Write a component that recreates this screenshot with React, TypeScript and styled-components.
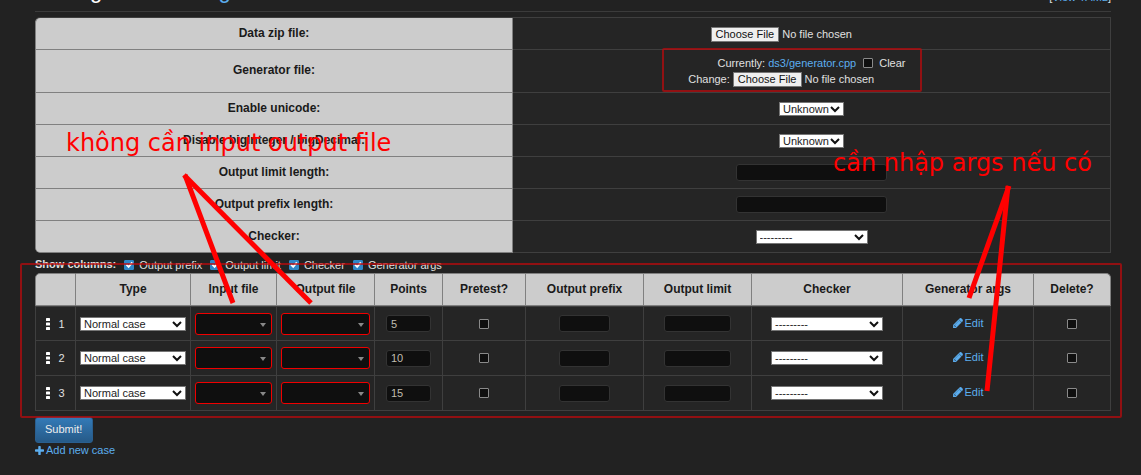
import React from "react";
import styled, { createGlobalStyle } from "styled-components";

const GlobalStyle = createGlobalStyle`
  *, *::before, *::after { box-sizing: border-box; }
  body {
    margin: 0;
    background: #222;
    color: #e0e0e0;
    font: 11px/16px "Liberation Sans", Arial, sans-serif;
  }
  input, select, button { font: inherit; margin: 0; }
`;

const Page = styled.main`
  position: relative;
  padding: 0 30px 16px 35px;
  overflow: hidden;
`;

const Header = styled.header`
  display: flex;
  justify-content: space-between;
  align-items: flex-end;
  height: 12px;
  padding-bottom: 8px;
  border-bottom: 1px solid #3b3b3b;
  margin-bottom: 5px;
`;

const Title = styled.h2`
  margin: 0;
  font-size: 22px;
  font-weight: 400;
  line-height: 24px;
  color: #fff;
`;

const HeaderNote = styled.span`
  line-height: 12px;
`;

const Link = styled.a`
  color: #5caeef;
  text-decoration: none;
`;

const IconLink = styled(Link)`
  display: inline-flex;
  align-items: center;
  gap: 2px;
  line-height: 14px;
`;

const Table = styled.table`
  width: 100%;
  table-layout: fixed;
  border-collapse: separate;
  border-spacing: 0;
`;

const HeadCell = styled.th`
  padding: 0 4px 2px;
  background: #ccc;
  color: #1a1a1a;
  font-size: 12px;
  line-height: 16px;
  text-align: center;
  vertical-align: middle;
`;

const SettingsTable = styled(Table)`
  border-top: 1px solid #3f3f3f;
  border-radius: 5px 0 0 5px;
  overflow: hidden;
`;

const SettingName = styled(HeadCell)`
  width: 478px;
  border: solid #808080;
  border-width: 0 1px 1px 1px;

  tr:first-child > & {
    border-top-left-radius: 5px;
    box-shadow: 0 -1px 0 #808080;
  }
  tr:last-child > & { border-bottom-left-radius: 5px; }
`;

const SettingValue = styled.td<{ $tall?: boolean }>`
  height: ${(p) => (p.$tall ? 43 : 32)}px;
  padding: 0;
  background: #252525;
  border: solid #3f3f3f;
  border-width: 0 1px 1px 0;
  text-align: center;
  vertical-align: middle;
`;

const ValueLine = styled.div`
  display: flex;
  justify-content: center;
  align-items: center;
  gap: 3px;
  height: 16px;
`;

const ClearLabel = styled.label`
  display: inline-flex;
  align-items: center;
  gap: 6px;
  margin-left: 4px;
`;

const FileInput = styled.input.attrs({ type: "file" })`
  width: 202px;
  height: 16px;
  line-height: 16px;
  vertical-align: middle;
  color: #e0e0e0;

  &::file-selector-button {
    height: 15px;
    margin: 0 3px 0 0;
    padding: 0 4px;
    border: 1px solid #767676;
    border-radius: 0;
    background: #efefef;
    color: #111;
    font: inherit;
    line-height: 13px;
  }
`;

const SelectBox = styled.span<{ $width?: number }>`
  position: relative;
  display: block;
  width: ${(p) => (p.$width ? `${p.$width}px` : "100%")};
  height: 14px;
  margin: 0 auto;
`;

const SelectControl = styled.select`
  display: block;
  appearance: none;
  width: 100%;
  height: 14px;
  padding: 0 12px 0 3px;
  border: 1px solid #767676;
  border-radius: 0;
  background: #fff;
  color: #222;
  line-height: 12px;
`;

const Chevron = styled.svg`
  position: absolute;
  right: 4px;
  top: 4px;
  pointer-events: none;
`;

const TextInput = styled.input<{ $width: number }>`
  width: ${(p) => p.$width}px;
  max-width: 100%;
  height: 17px;
  padding: 0 4px;
  border: 1px solid #333;
  border-radius: 3px;
  background: #0f0f0f;
  color: #c0bcb0;
  vertical-align: middle;
`;

const Checkbox = styled.input.attrs({ type: "checkbox" })`
  appearance: none;
  position: relative;
  flex: none;
  width: 10px;
  height: 10px;
  border: 1px solid #8a8a8a;
  border-radius: 1px;
  background: #0f0f0f;
  vertical-align: middle;

  td > & {
    display: block;
    margin: 0 auto;
  }
  &:checked {
    border-color: #2f86c8;
    background: #2f86c8;
  }
  &:checked::before {
    content: "";
    position: absolute;
    inset: 0;
    background: #fff;
    clip-path: polygon(6% 54%, 22% 38%, 40% 56%, 78% 8%, 96% 24%, 42% 90%);
  }
`;

const ColumnToggles = styled.div`
  display: flex;
  align-items: center;
  gap: 8px;
  height: 20px;
  padding-top: 4px;
`;

const TogglesTitle = styled.strong`
  padding-bottom: 2px;
`;

const Toggle = styled.label`
  display: inline-flex;
  align-items: center;
  gap: 5px;
`;

const CaseHead = styled(HeadCell)`
  height: 33px;
  border: solid #808080;
  border-width: 1px 1px 1px 0;

  &:first-child { border-left-width: 1px; border-top-left-radius: 5px; }
  &:last-child { border-top-right-radius: 5px; }
`;

const CaseCell = styled.td`
  height: 35px;
  padding: 0 4px;
  background: #252525;
  border: solid #3f3f3f;
  border-width: 0 1px 1px 0;
  text-align: center;
  vertical-align: middle;

  &:first-child { border-left-width: 1px; }
  tr:first-child > & { border-top-width: 1px; }
`;

const OrderHandle = styled.div`
  display: flex;
  align-items: center;
  justify-content: center;
  gap: 8px;
`;

const FilePicker = styled.div`
  position: relative;

  &::after {
    content: "";
    position: absolute;
    right: 6px;
    top: 10px;
    border: solid transparent;
    border-width: 4px 3px 0 3px;
    border-top-color: #888;
    pointer-events: none;
  }
`;

const FileSelect = styled.select`
  display: block;
  appearance: none;
  width: 100%;
  height: 22px;
  padding: 0 16px 0 6px;
  border: 1px solid #f00000;
  border-radius: 3px;
  background: #0f0f0f;
  color: #ccc;
`;

const Footer = styled.div`
  display: flex;
  flex-direction: column;
  align-items: flex-start;
  padding-top: 6px;
`;

const SubmitButton = styled.button`
  height: 26px;
  padding: 0 10px 2px 9px;
  border: 1px solid #2a5f8f;
  border-radius: 3px;
  background: linear-gradient(#337ab7, #265a88);
  color: #eee;
`;

const Frame = styled.div<{ $x: number; $y: number; $w: number; $h: number }>`
  position: absolute;
  left: ${(p) => p.$x}px;
  top: ${(p) => p.$y}px;
  width: ${(p) => p.$w}px;
  height: ${(p) => p.$h}px;
  border: 2px solid rgba(192, 8, 12, 0.7);
  border-radius: 2px;
  pointer-events: none;
`;

const Note = styled.span<{ $x: number; $y: number }>`
  position: absolute;
  left: ${(p) => p.$x}px;
  top: ${(p) => p.$y}px;
  color: #f00;
  font: 24px/28px "DejaVu Sans", sans-serif;
  white-space: nowrap;
  pointer-events: none;
`;

const Arrows = styled.svg`
  position: absolute;
  left: 0;
  top: 0;
  pointer-events: none;
`;

const PENCIL =
  "M491 1536l91-91-235-235-91 91v107h128v128h107zM1014 608q0-22-22-22-10 0-17 7l-542 542q-7 7-7 17 0 22 22 22 10 0 17-7l542-542q7-7 7-17zM960 416l416 416-832 832h-416v-416zM1643 512q0 53-37 90l-166 166-416-416 166-165q36-38 90-38 53 0 91 38l235 234q37 39 37 91z";
const PLUS =
  "M1600 736v192q0 40-28 68t-68 28h-416v416q0 40-28 68t-68 28h-192q-40 0-68-28t-28-68v-416h-416q-40 0-68-28t-28-68v-192q0-40 28-68t68-28h416v-416q0-40 28-68t68-28h192q40 0 68 28t28 68v416h416q40 0 68 28t28 68z";

const Pencil = () => (
  <svg
    width="10"
    height="10"
    viewBox="110 130 1550 1550"
    fill="currentColor"
    stroke="currentColor"
    strokeWidth="70"
    aria-hidden="true"
  >
    <path d={PENCIL} />
  </svg>
);

const Plus = () => (
  <svg width="9" height="9" viewBox="192 128 1408 1408" fill="currentColor" aria-hidden="true">
    <path d={PLUS} />
  </svg>
);

const Grip = () => (
  <svg width="4" height="12" viewBox="0 0 4 12" fill="#fff" aria-hidden="true">
    <rect width="4" height="3" rx="0.6" />
    <rect y="4.5" width="4" height="3" rx="0.6" />
    <rect y="9" width="4" height="3" rx="0.6" />
  </svg>
);

type SelectProps = {
  option: string;
  width?: number;
  id?: string;
  "aria-label"?: string;
};

const Select = ({ option, width, ...rest }: SelectProps) => (
  <SelectBox $width={width}>
    <SelectControl {...rest}>
      <option>{option}</option>
    </SelectControl>
    <Chevron width="10" height="7" viewBox="0 0 10 7" fill="none" stroke="#111" strokeWidth="2" aria-hidden="true">
      <path d="M1 1L5 5L9 1" />
    </Chevron>
  </SelectBox>
);

const columns: [string, number][] = [
  ["", 41],
  ["Type", 115],
  ["Input file", 86],
  ["Output file", 98],
  ["Points", 68],
  ["Pretest?", 83],
  ["Output prefix", 118],
  ["Output limit", 108],
  ["Checker", 151],
  ["Generator args", 131],
  ["Delete?", 77],
];

const toggles = ["Output prefix", "Output limit", "Checker", "Generator args"];
const cases = [5, 10, 15];

type SettingProps = { id: string; name: string; tall?: boolean; children: React.ReactNode };

const Setting = ({ id, name, tall, children }: SettingProps) => (
  <tr>
    <SettingName scope="row">
      <label htmlFor={id}>{name}</label>
    </SettingName>
    <SettingValue $tall={tall}>{children}</SettingValue>
  </tr>
);

const CaseRow = ({ index, points }: { index: number; points: number }) => (
  <tr>
    <CaseCell>
      <OrderHandle>
        <Grip />
        {index}
      </OrderHandle>
    </CaseCell>
    <CaseCell>
      <Select aria-label="Type" option="Normal case" />
    </CaseCell>
    <CaseCell>
      <FilePicker>
        <FileSelect aria-label="Input file" />
      </FilePicker>
    </CaseCell>
    <CaseCell>
      <FilePicker>
        <FileSelect aria-label="Output file" />
      </FilePicker>
    </CaseCell>
    <CaseCell>
      <TextInput $width={45} aria-label="Points" defaultValue={points} />
    </CaseCell>
    <CaseCell>
      <Checkbox aria-label="Pretest?" />
    </CaseCell>
    <CaseCell>
      <TextInput $width={51} aria-label="Output prefix" />
    </CaseCell>
    <CaseCell>
      <TextInput $width={67} aria-label="Output limit" />
    </CaseCell>
    <CaseCell>
      <Select width={112} aria-label="Checker" option="---------" />
    </CaseCell>
    <CaseCell>
      <IconLink href="#args">
        <Pencil />
        Edit
      </IconLink>
    </CaseCell>
    <CaseCell>
      <Checkbox aria-label="Delete?" />
    </CaseCell>
  </tr>
);

export default function App() {
  return (
    <Page>
      <GlobalStyle />
      <Header>
        <Title>
          Editing data for <Link href="#problem">long</Link>
        </Title>
        <HeaderNote>
          [<Link href="#yaml">View YAML</Link>]
        </HeaderNote>
      </Header>

      <SettingsTable>
        <tbody>
          <Setting id="zip" name="Data zip file:">
            <FileInput id="zip" />
          </Setting>
          <Setting id="generator" name="Generator file:" tall>
            <ValueLine>
              <span>Currently:</span>
              <Link href="#generator">ds3/generator.cpp</Link>
              <ClearLabel>
                <Checkbox />
                Clear
              </ClearLabel>
            </ValueLine>
            <ValueLine>
              <span>Change:</span>
              <FileInput id="generator" />
            </ValueLine>
          </Setting>
          <Setting id="unicode" name="Enable unicode:">
            <Select id="unicode" width={65} option="Unknown" />
          </Setting>
          <Setting id="bigint" name="Disable bigInteger / bigDecimal:">
            <Select id="bigint" width={65} option="Unknown" />
          </Setting>
          <Setting id="limit" name="Output limit length:">
            <TextInput id="limit" $width={151} />
          </Setting>
          <Setting id="prefix" name="Output prefix length:">
            <TextInput id="prefix" $width={151} />
          </Setting>
          <Setting id="checker" name="Checker:">
            <Select id="checker" width={112} option="---------" />
          </Setting>
        </tbody>
      </SettingsTable>

      <ColumnToggles>
        <TogglesTitle>Show columns:</TogglesTitle>
        {toggles.map((name) => (
          <Toggle key={name}>
            <Checkbox defaultChecked />
            {name}
          </Toggle>
        ))}
      </ColumnToggles>

      <Table>
        <colgroup>
          {columns.map(([name, width]) => (
            <col key={name} width={width} />
          ))}
        </colgroup>
        <thead>
          <tr>
            {columns.map(([name]) => (
              <CaseHead key={name} scope="col">
                {name}
              </CaseHead>
            ))}
          </tr>
        </thead>
        <tbody>
          {cases.map((points, i) => (
            <CaseRow key={points} index={i + 1} points={points} />
          ))}
        </tbody>
      </Table>

      <Footer>
        <SubmitButton type="submit">Submit!</SubmitButton>
        <IconLink href="#add">
          <Plus />
          Add new case
        </IconLink>
      </Footer>

      <Frame $x={662} $y={48} $w={260} $h={44} />
      <Frame $x={20} $y={263} $w={1102} $h={155} />
      <Note $x={66} $y={129}>không cần input output file</Note>
      <Note $x={833} $y={149}>cần nhập args nếu có</Note>
      <Arrows width="1141" height="475" viewBox="0 0 1141 475" fill="none" stroke="#f00" strokeWidth="5" aria-hidden="true">
        <path d="M185 175L233 303" />
        <path d="M184 175L311 303" />
        <path d="M1009 186L969 298" />
        <path d="M1008 186L987 391" />
      </Arrows>
    </Page>
  );
}
